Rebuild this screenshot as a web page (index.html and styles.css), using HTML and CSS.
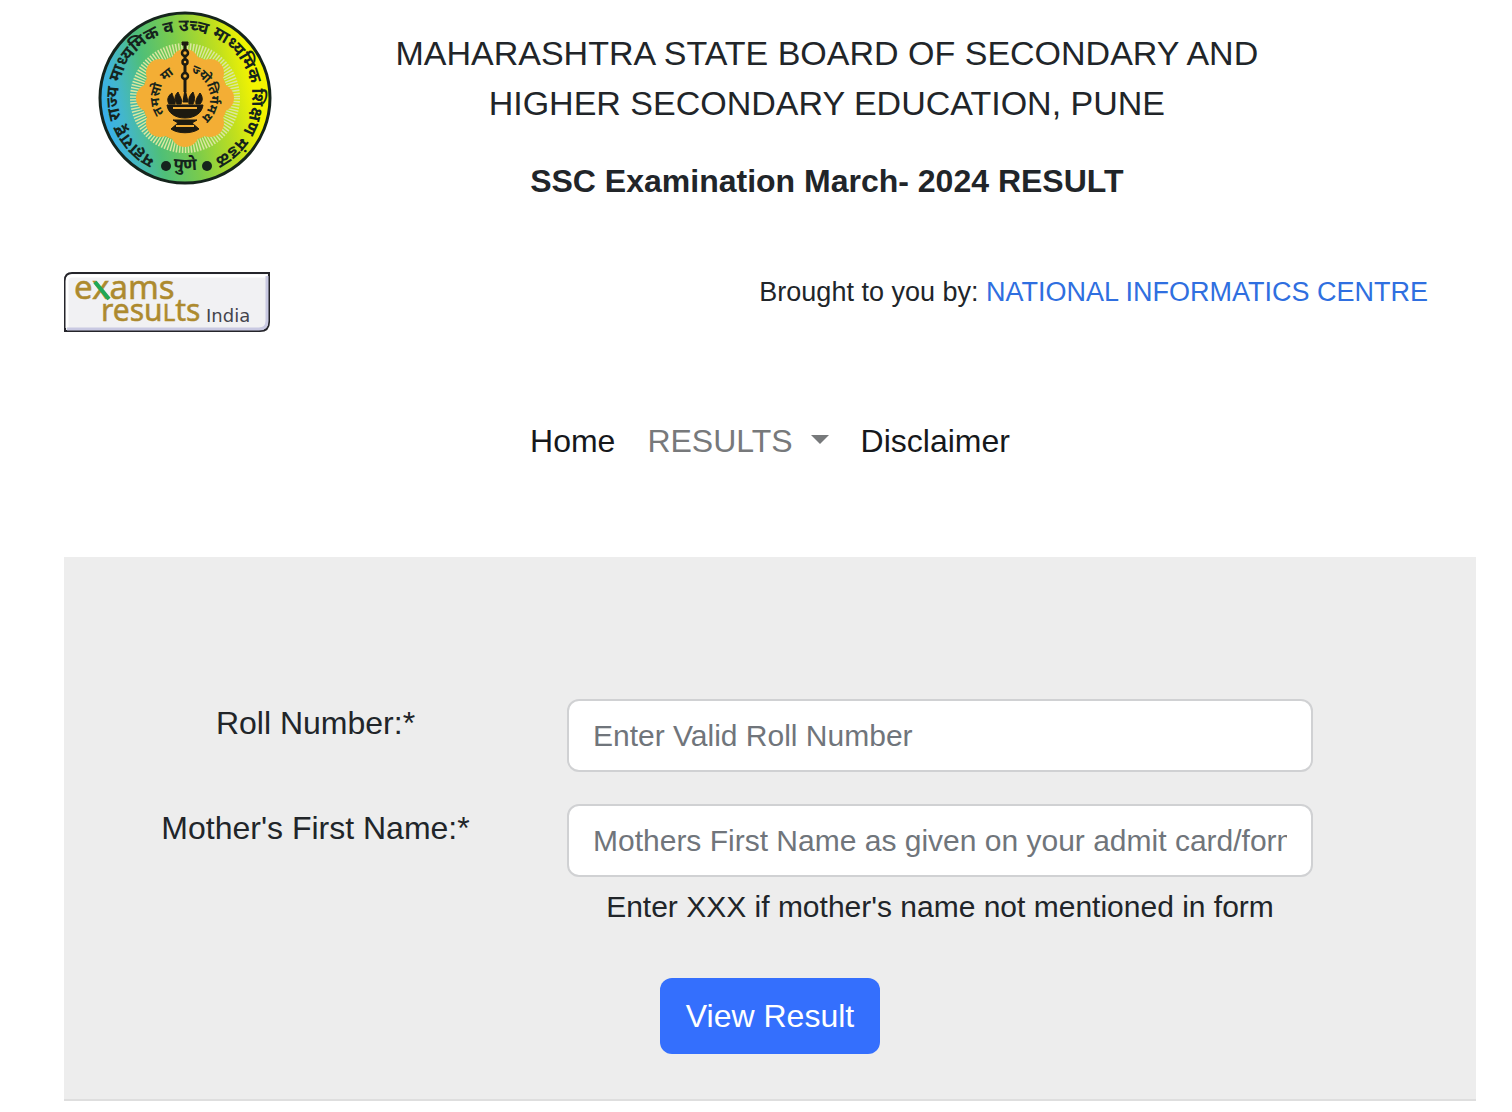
FILE: index.html
```
<!DOCTYPE html>
<html lang="en">
<head>
    <meta charset="UTF-8">
    <meta name="viewport" content="width=device-width, initial-scale=1.0">
    <title>SSC Examination Result</title>
    <link rel="stylesheet" href="styles.css">
</head>
<body>

    <div class="container">
        <!-- Header -->
        <header class="header">
            <div class="emblem">
                <svg width="176" height="176" viewBox="0 0 176 176" role="img" aria-label="Board emblem">
                    <defs>
                        <linearGradient id="ring" x1="0" y1="0.6" x2="1" y2="0.4">
                            <stop offset="0" stop-color="#36aef0"/>
                            <stop offset="0.12" stop-color="#42b6d0"/>
                            <stop offset="0.3" stop-color="#4fbf78"/>
                            <stop offset="0.5" stop-color="#7acb4c"/>
                            <stop offset="0.75" stop-color="#c3e01c"/>
                            <stop offset="0.9" stop-color="#f4f400"/>
                            <stop offset="1" stop-color="#f4f400"/>
                        </linearGradient>
                        <path id="arcTop" d="M60 149 A67 67 0 1 1 116 149"/>
                        <path id="arcBottom" d="M60 155 A76 76 0 0 0 116 155"/>
                        <path id="arcLeft" d="M67 103 A26 26 0 0 1 88 62"/>
                        <path id="arcRight" d="M94 63 A26 26 0 0 1 88 114"/>
                    </defs>
                    <circle cx="88" cy="88" r="85" fill="url(#ring)" stroke="#15241c" stroke-width="3"/>
                    <circle cx="88" cy="88" r="49" fill="none" stroke="#dbe7a0" stroke-width="12" stroke-dasharray="1.4 1.4"/>
                    <g fill="#f3ae35">
                        <circle cx="88" cy="88" r="43"/>
                        <circle cx="88" cy="53" r="14"/>
                        <circle cx="113" cy="63" r="14"/>
                        <circle cx="123" cy="88" r="14"/>
                        <circle cx="113" cy="113" r="14"/>
                        <circle cx="88" cy="123" r="14"/>
                        <circle cx="63" cy="113" r="14"/>
                        <circle cx="53" cy="88" r="14"/>
                        <circle cx="63" cy="63" r="14"/>
                    </g>
                    <!-- Lamp -->
                    <g fill="#1d1a10" stroke="#1d1a10">
                        <path d="M88 32v50" stroke-width="3" fill="none"/>
                        <path d="M85 32h6v3h-6z"/>
                        <g fill="#f3ae35" stroke-width="2.5">
                            <circle cx="88" cy="43" r="3"/>
                            <circle cx="88" cy="52" r="2.5"/>
                            <circle cx="88" cy="66" r="3"/>
                        </g>
                        <path d="M70 95h36c-1 8-8 13-18 13s-17-5-18-13z"/>
                        <path d="M76 110h24l-5 3 7 6c-7 5-21 5-28 0l7-6z"/>
                        <path d="M72 94c-3-5 0-9 3-11 1 5 4 7 3 11zM80 94c-4-6-1-10 1-12 2 5 5 8 3 12zM86 92l2-13 3 13zM92 94c-1-6 1-9 4-12 2 5 2 8 0 12zM99 94c-1-4 2-8 4-11 3 4 3 8 0 11z" stroke-width="1"/>
                        <path d="M76 98h24M79 116h18" stroke="#f3ae35" stroke-width="2" fill="none"/>
                    </g>
                    <g class="emblem-text">
                        <text><textPath href="#arcTop" startOffset="50%" text-anchor="middle">महाराष्ट्र राज्य माध्यमिक व उच्च माध्यमिक शिक्षण मंडळ</textPath></text>
                        <text><textPath href="#arcBottom" startOffset="50%" text-anchor="middle">पुणे</textPath></text>
                        <text class="motto"><textPath href="#arcLeft">तमसो मा</textPath></text>
                        <text class="motto"><textPath href="#arcRight">ज्योतिर्गमय</textPath></text>
                    </g>
                    <circle cx="69" cy="156" r="5" fill="#15241c"/>
                    <circle cx="110" cy="156" r="5" fill="#15241c"/>
                </svg>
            </div>
            <div class="heading">
                <h1>MAHARASHTRA STATE BOARD OF SECONDARY AND HIGHER SECONDARY EDUCATION, PUNE</h1>
                <h2>SSC Examination March- 2024 RESULT</h2>
            </div>
        </header>

        <!-- Brought by -->
        <div class="brought">
            <svg class="exams-logo" width="206" height="60" viewBox="0 0 206 60" role="img" aria-label="exams results India">
                <path d="M8 1H205V50Q205 59 196 59H1V8Q1 1 8 1Z" fill="#f1f1f3" stroke="#25252b" stroke-width="2"/>
                <path d="M3 56V9Q3 4 8 4H203" fill="none" stroke="#fff" stroke-width="3"/>
                <path d="M203 4V49Q203 57 195 57H3" fill="none" stroke="#c9c9e2" stroke-width="3"/>
                <text class="gold" x="10" y="27" font-size="33">exams</text>
                <path d="M31 10L45 27" stroke="#1fa757" stroke-width="4"/>
                <text class="gold" x="37" y="49" font-size="30">resu<tspan font-size="24">L</tspan>ts</text>
                <text class="india" x="142" y="50" font-size="18">India</text>
            </svg>
            <p>Brought to you by: <a href="#">NATIONAL INFORMATICS CENTRE</a></p>
        </div>

        <!-- Menu -->
        <nav class="menu">
            <a href="#">Home</a>
            <a href="#" class="dropdown">RESULTS</a>
            <a href="#">Disclaimer</a>
        </nav>

        <!-- Result form -->
        <form class="result-form">
            <div class="form-group">
                <label for="rollNumber">Roll Number:*</label>
                <div class="field">
                    <input type="text" id="rollNumber" placeholder="Enter Valid Roll Number">
                </div>
            </div>

            <div class="form-group">
                <label for="motherName">Mother's First Name:*</label>
                <div class="field">
                    <input type="text" id="motherName" placeholder="Mothers First Name as given on your admit card/form">
                    <p>Enter XXX if mother's name not mentioned in form</p>
                </div>
            </div>

            <button type="button">View Result</button>
        </form>
    </div>

</body>
</html>
```
FILE: styles.css
```
* {
    box-sizing: border-box;
}

body {
    font-family: "Liberation Sans", Arial, sans-serif;
    background-color: #fff;
    color: #212529;
    margin: 0;
}

.container {
    padding: 10px 36px 12px 64px;
}

h1, h2, p {
    margin: 0;
}

a {
    color: #2f6fe0;
    text-decoration: none;
}

.header {
    display: grid;
    grid-template-columns: 2fr 9fr 1fr;
}

.emblem {
    padding-left: 33px;
}

.emblem svg, .exams-logo {
    display: block;
}

.emblem-text {
    font-family: "Noto Sans Devanagari", "Noto Sans", sans-serif;
    font-size: 17px;
    font-weight: bold;
    fill: #15241c;
}

.motto {
    font-size: 13px;
}

.heading {
    text-align: center;
    padding: 18px 84px 0 80px;
}

h1 {
    font-size: 34px;
    font-weight: normal;
    line-height: 50px;
}

h2 {
    font-size: 32px;
    line-height: 48px;
    margin-top: 29px;
}

.brought {
    display: flex;
    justify-content: space-between;
    align-items: flex-start;
    margin-top: 67px;
    padding-right: 48px;
}

.brought p {
    font-size: 27px;
    line-height: 40px;
}

.gold {
    font-family: "Noto Sans", sans-serif;
    fill: #ad8a2e;
    stroke: #ad8a2e;
    stroke-width: 0.5px;
}

.india {
    font-family: "DejaVu Sans", sans-serif;
    fill: #44444c;
}

/* Menu */
.menu {
    display: flex;
    justify-content: center;
    gap: 32px;
    margin-top: 85px;
    font-size: 32px;
    line-height: 48px;
}

.menu a {
    color: #16181b;
}

.menu .dropdown {
    color: #77797b;
}

.dropdown::after {
    content: "";
    display: inline-block;
    margin-left: 18px;
    vertical-align: 8px;
    border-top: 9px solid;
    border-left: 9px solid transparent;
    border-right: 9px solid transparent;
}

/* Form */
.result-form {
    background-color: #ededed;
    border-bottom: 2px solid #dedede;
    margin-top: 92px;
    padding: 142px 0 45px;
    text-align: center;
}

.form-group {
    display: grid;
    grid-template-columns: 503fr 746fr 163fr;
    margin-bottom: 32px;
}

label {
    font-size: 32px;
    line-height: 48px;
}

input {
    display: block;
    width: 100%;
    height: 73px;
    padding: 0 24px;
    border: 2px solid #d0d1d3;
    border-radius: 12px;
    background-color: #fff;
    font-family: inherit;
    font-size: 30px;
}

input::placeholder {
    color: #70757b;
    opacity: 1;
}

.field p {
    font-size: 30px;
    line-height: 44px;
    margin-top: 8px;
    margin-bottom: 17px;
}

button {
    background-color: #346ffd;
    color: #fff;
    border: none;
    border-radius: 12px;
    padding: 14px 26px;
    font-family: inherit;
    font-size: 32px;
    line-height: 48px;
    cursor: pointer;
}

@media (max-width: 768px) {
    .container {
        padding: 10px 16px;
    }

    .header, .form-group {
        grid-template-columns: 1fr;
    }

    .brought {
        flex-wrap: wrap;
    }
}
```
